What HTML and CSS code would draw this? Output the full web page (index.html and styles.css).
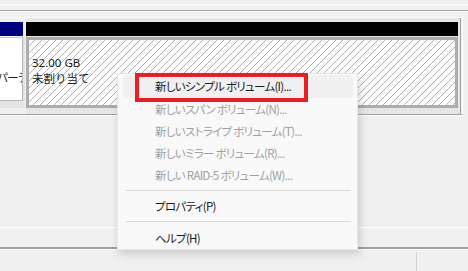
FILE: index.html
```html
<!DOCTYPE html>
<html>
	<head>
		<meta charset="utf-8">
		<title>ディスクの管理</title>
		<link rel="stylesheet" href="styles.css">
	</head>
	<body>
		<div class="window">
			<div class="top-edge"></div>
			<div class="disk">
				<div class="part part-left">
					<div class="part-head head-blue"></div>
					<div class="part-body body-plain">
						<div class="plain-box"><span>パーテ</span></div>
					</div>
				</div>
				<div class="part part-free">
					<div class="part-head head-black"></div>
					<div class="part-body body-hatch">
						<p>32.00 GB</p>
						<p>未割り当て</p>
					</div>
				</div>
			</div>
			<div class="blank"></div>
			<div class="legend-bar"></div>
			<div class="status">
				<div class="status-cell"></div>
				<div class="status-cell"></div>
			</div>

			<!-- 右クリックメニュー -->
			<ul class="menu">
				<li class="item hover">新しいシンプル ボリューム(I)...</li>
				<li class="item off">新しいスパン ボリューム(N)...</li>
				<li class="item off">新しいストライプ ボリューム(T)...</li>
				<li class="item off">新しいミラー ボリューム(R)...</li>
				<li class="item off">新しい RAID-5 ボリューム(W)...</li>
				<li class="sep first-sep"></li>
				<li class="item">プロパティ(P)</li>
				<li class="sep"></li>
				<li class="item">ヘルプ(H)</li>
				<div class="mark"></div>
			</ul>
		</div>
	</body>
</html>
```

FILE: styles.css
```css
* {
	margin: 0;
	padding: 0;
	box-sizing: border-box;
}

body {
	background-color: #f0f0f0;
	font-family: "Noto Sans", "Noto Sans CJK JP", sans-serif;
	font-size: 12px;
	color: #1b1b1b;
}

.window {
	position: relative;
	width: 468px;
	height: 271px;
	overflow: hidden;
	background-color: #f0f0f0;
}

.top-edge {
	height: 12px;
	background: linear-gradient(#f0f0f0 0 4px, #f8f8f8 4px 6px, #f0f0f0 6px 10px, #a0a0a0 10px 11px, #ffffff 11px 12px);
}

/* ディスク行 */
.disk {
	display: flex;
	width: 463px;
	height: 98px;
	margin-top: 5px;
	padding-top: 4px;
	border-top: 1px solid #ffffff;
	border-right: 1px solid #ffffff;
	border-bottom: 1px solid #a0a0a0;
	box-shadow: 0 1px 0 #ffffff;
}

.part {
	display: flex;
	flex-direction: column;
}

.part-left {
	width: 26px;
}

.part-free {
	width: 435px;
	padding-right: 2px;
	border-right: 1px solid #a0a0a0;
	background-color: #e6e6e6;
	margin-top: -4px;
	padding-top: 4px;
}

.part-head {
	height: 14px;
}

.head-blue {
	width: 23px;
	background-color: #000080;
}

.head-black {
	background-color: #000000;
}

.part-body {
	margin-top: 1px;
	height: 71px;
}

.body-plain {
	width: 25px;
	background-color: #e4e4e4;
}

.plain-box {
	width: 23px;
	height: 64px;
	background-color: #ffffff;
	border-top: 1px solid #c8c8c8;
	border-right: 1px solid #b4b4b4;
	border-bottom: 1px solid #b4b4b4;
	overflow: hidden;
	white-space: nowrap;
	padding-top: 31px;
	line-height: 16px;
	text-indent: -3px;
	letter-spacing: -0.5px;
	font-family: "Noto Sans CJK JP", sans-serif;
	font-size: 11.5px;
	font-feature-settings: "palt";
}

.body-hatch {
	border: 3px solid #acacac;
	padding: 15px 0 0 3px;
	line-height: 16px;
	background: repeating-linear-gradient(135deg, #ffffff 0 3.6px, #b2b2b2 3.6px 4.6px, #ffffff 4.6px 4.95px);
}

.body-hatch p {
	font-family: "Noto Sans", "Noto Sans CJK JP", sans-serif;
	font-size: 11.5px;
}

.blank {
	height: 112px;
}

.legend-bar {
	height: 22px;
	border-top: 1px solid #ffffff;
	border-bottom: 2px solid #a0a0a0;
	box-shadow: 0 1px 0 #ffffff;
}

.status {
	display: flex;
	padding-top: 3px;
	height: 25px;
}

.status-cell {
	width: 417px;
	border-right: 1px solid #d2d2d2;
}

.status-cell + .status-cell {
	width: auto;
	border: none;
}

/* メニュー */
.menu {
	position: absolute;
	left: 117px;
	top: 73px;
	width: 241px;
	height: 177px;
	padding: 1px 4px 0 5px;
	list-style: none;
	background-color: #f9f9f9;
	border: 1px solid #e6e6e6;
	box-shadow: 2px 4px 9px rgba(0, 0, 0, .16);
	font-family: "Noto Sans CJK JP", sans-serif;
	font-size: 11.5px;
	letter-spacing: -0.7px;
	font-feature-settings: "palt";
}

.item {
	height: 22px;
	line-height: 22px;
	padding-left: 32px;
	border-radius: 4px;
	white-space: nowrap;
	color: #1b1b1b;
}

.item.hover {
	height: 23px;
	line-height: 23px;
	background-color: #f0f0f0;
}

.item.off {
	color: #a0a0a0;
}

.sep {
	height: 1px;
	margin: 4px 2px 5px 3px;
	background-color: #d8d8d8;
}

.first-sep {
	margin-top: 4px;
	margin-bottom: 4px;
}

.mark {
	position: absolute;
	left: 17px;
	top: -1px;
	width: 173px;
	height: 29px;
	border: 4px solid #ea1c24;
}
```
